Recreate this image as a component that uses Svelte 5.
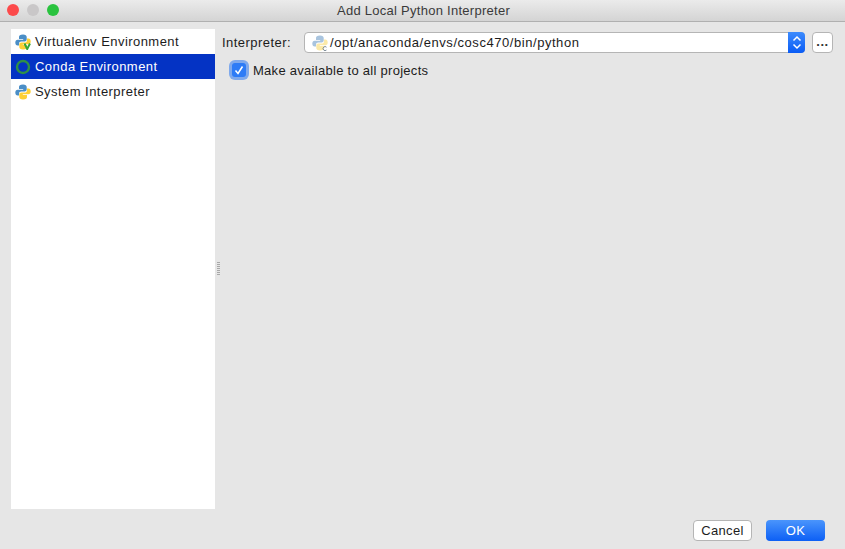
<script>
  const items = [
    { label: "Virtualenv Environment", icon: "venv" },
    { label: "Conda Environment", icon: "conda", selected: true },
    { label: "System Interpreter", icon: "python" }
  ];
</script>

{#snippet python(pale)}
  <path d="M8 .5C5 .5 4 1.600 4 3V5H8.200V5.700H2.600C1.200 5.700 .3 6.800 .3 8.500S1.200 11.500 2.600 11.500H4V9.500C4 8.300 5 7.400 6.200 7.400H9.800C10.800 7.400 11.700 6.600 11.700 5.600V3C11.700 1.600 10.500 .5 8 .5Z" fill={pale ? "#a9c4de" : "#4b8ec6"} />
  <path d="M8 15.500C11 15.500 12 14.400 12 13V11H7.800V10.300H13.400C14.800 10.300 15.700 9.200 15.700 7.500S14.800 4.500 13.400 4.500H12V6.500C12 7.700 11 8.600 9.800 8.600H6.200C5.200 8.600 4.300 9.400 4.300 10.400V13C4.300 14.400 5.500 15.500 8 15.500Z" fill={pale ? "#fbe9a8" : "#fdd035"} />
{/snippet}

<div class="window">
  <header class="titlebar">
    <div class="lights">
      <span class="light red"></span>
      <span class="light grey"></span>
      <span class="light green"></span>
    </div>
    <span class="title">Add Local Python Interpreter</span>
  </header>

  <div class="body">
    <div class="main">
      <ul class="list">
        {#each items as item}
          <li class:selected={item.selected}>
            <svg class="icon" viewBox="0 0 16 16" width="16" height="16">
              {#if item.icon === "conda"}
                <circle cx="8" cy="8" r="6" fill="none" stroke="#2f9048" stroke-width="2.400" />
              {:else}
                {@render python(false)}
                {#if item.icon === "venv"}
                  <path d="M9.500 9.500L12.200 15L15 9.500" fill="none" stroke="#3aa63a" stroke-width="2" />
                {/if}
              {/if}
            </svg>
            <span>{item.label}</span>
          </li>
        {/each}
      </ul>

      <div class="splitter">
        <span class="grip"></span>
      </div>

      <section class="form">
        <div class="row">
          <span class="label">Interpreter:</span>
          <div class="select">
            <svg class="icon" viewBox="0 0 16 16" width="16" height="16">
              {@render python(true)}
              <path d="M14.500 12.200A2 2 0 1 0 14.500 15" fill="none" stroke="#7b8a96" />
            </svg>
            <span class="path">/opt/anaconda/envs/cosc470/bin/python</span>
            <span class="stepper">
              <svg viewBox="0 0 10 15" width="10" height="15">
                <path d="M1.500 5.500L5 2L8.500 5.500M1.500 9.500L5 13L8.500 9.500" fill="none" stroke="#fff" stroke-width="1.500" />
              </svg>
            </span>
          </div>
          <button class="browse">...</button>
        </div>

        <label class="check">
          <span class="box">
            <svg viewBox="0 0 12 12" width="12" height="12">
              <path d="M2.500 6.500L5 9.500L9.500 2.500" fill="none" stroke="#fff" stroke-width="1.500" />
            </svg>
          </span>
          <span>Make available to all projects</span>
        </label>
      </section>
    </div>

    <footer class="actions">
      <button class="cancel">Cancel</button>
      <button class="ok">OK</button>
    </footer>
  </div>
</div>

<style>
  :global(body) {
    margin: 0;
  }
  .window {
    width: 845px;
    height: 549px;
    display: flex;
    flex-direction: column;
    background: #e6e6e6;
    font-family: "Liberation Sans", Arial, sans-serif;
    font-size: 13px;
    color: #1c1c1c;
    overflow: hidden;
  }
  .titlebar {
    height: 21px;
    flex: none;
    display: flex;
    align-items: center;
    justify-content: center;
    position: relative;
    background: linear-gradient(#ebebeb, #d4d4d4);
    border-bottom: 1px solid #b0b0b0;
  }
  .lights {
    position: absolute;
    left: 7px;
    top: 4px;
    display: flex;
    gap: 8px;
  }
  .light {
    width: 12px;
    height: 12px;
    border-radius: 50%;
  }
  .red {
    background: #fc4a4b;
  }
  .grey {
    background: #c9c7c8;
  }
  .green {
    background: #2ac33f;
  }
  .title {
    color: #3a3a3a;
    letter-spacing: 0.27px;
    padding-left: 2px;
  }
  .body {
    flex: 1;
    display: flex;
    flex-direction: column;
    min-height: 0;
  }
  .main {
    flex: 1;
    display: flex;
    padding: 7px 12px 0 11px;
    min-height: 0;
  }
  .list {
    width: 204px;
    flex: none;
    margin: 0;
    padding: 0;
    list-style: none;
    background: #fff;
  }
  .list li {
    height: 25px;
    display: flex;
    align-items: center;
    gap: 4px;
    padding-left: 4px;
    letter-spacing: 0.45px;
  }
  .list li.selected {
    background: #0433c4;
    color: #fff;
  }
  .icon {
    flex: none;
  }
  .splitter {
    width: 7px;
    flex: none;
    display: flex;
    align-items: center;
    justify-content: center;
  }
  .grip {
    width: 3px;
    height: 14px;
    background: repeating-linear-gradient(#a8a8a8 0 1px, transparent 1px 2px);
  }
  .form {
    flex: 1;
    min-width: 0;
    display: flex;
    flex-direction: column;
    gap: 10px;
    padding-top: 3px;
  }
  .row {
    display: flex;
    align-items: center;
  }
  .label {
    width: 82px;
    flex: none;
    letter-spacing: 0.45px;
  }
  .select {
    flex: 1;
    height: 21px;
    box-sizing: border-box;
    display: flex;
    align-items: center;
    gap: 2px;
    padding-left: 7px;
    background: #fff;
    border: 1px solid #b5b5b5;
    border-radius: 4px;
  }
  .path {
    flex: 1;
    letter-spacing: 0.55px;
  }
  .stepper {
    width: 17px;
    height: 21px;
    margin: -1px -1px -1px 0;
    display: flex;
    align-items: center;
    justify-content: center;
    background: linear-gradient(#3d8bfd, #0a5cf5);
    border-radius: 0 4px 4px 0;
  }
  .browse {
    width: 21px;
    height: 21px;
    box-sizing: border-box;
    margin-left: 7px;
    padding: 0 0 2px;
    background: #fff;
    border: 1px solid #b5b5b5;
    border-radius: 4px;
    font: inherit;
    font-weight: 700;
    letter-spacing: 0.5px;
    color: #333;
  }
  .check {
    display: flex;
    align-items: flex-start;
    gap: 7px;
    margin-left: 10px;
    letter-spacing: 0.28px;
  }
  .box {
    width: 14px;
    height: 14px;
    display: flex;
    align-items: center;
    justify-content: center;
    background: #2d7bf6;
    border-radius: 3px;
    box-shadow: 0 0 0 3px #7fa9ec;
  }
  .actions {
    height: 40px;
    flex: none;
    box-sizing: border-box;
    display: flex;
    justify-content: flex-end;
    align-items: center;
    gap: 14px;
    padding: 3px 20px 0 0;
  }
  .actions button {
    height: 21px;
    width: 59px;
    box-sizing: border-box;
    padding: 0;
    border-radius: 4px;
    font: inherit;
    letter-spacing: 0.3px;
  }
  .cancel {
    background: #fff;
    border: 1px solid #b5b5b5;
    color: #1c1c1c;
  }
  .ok {
    background: linear-gradient(#4a95fc, #0c5ff5);
    border: none;
    color: #fff;
  }
</style>
